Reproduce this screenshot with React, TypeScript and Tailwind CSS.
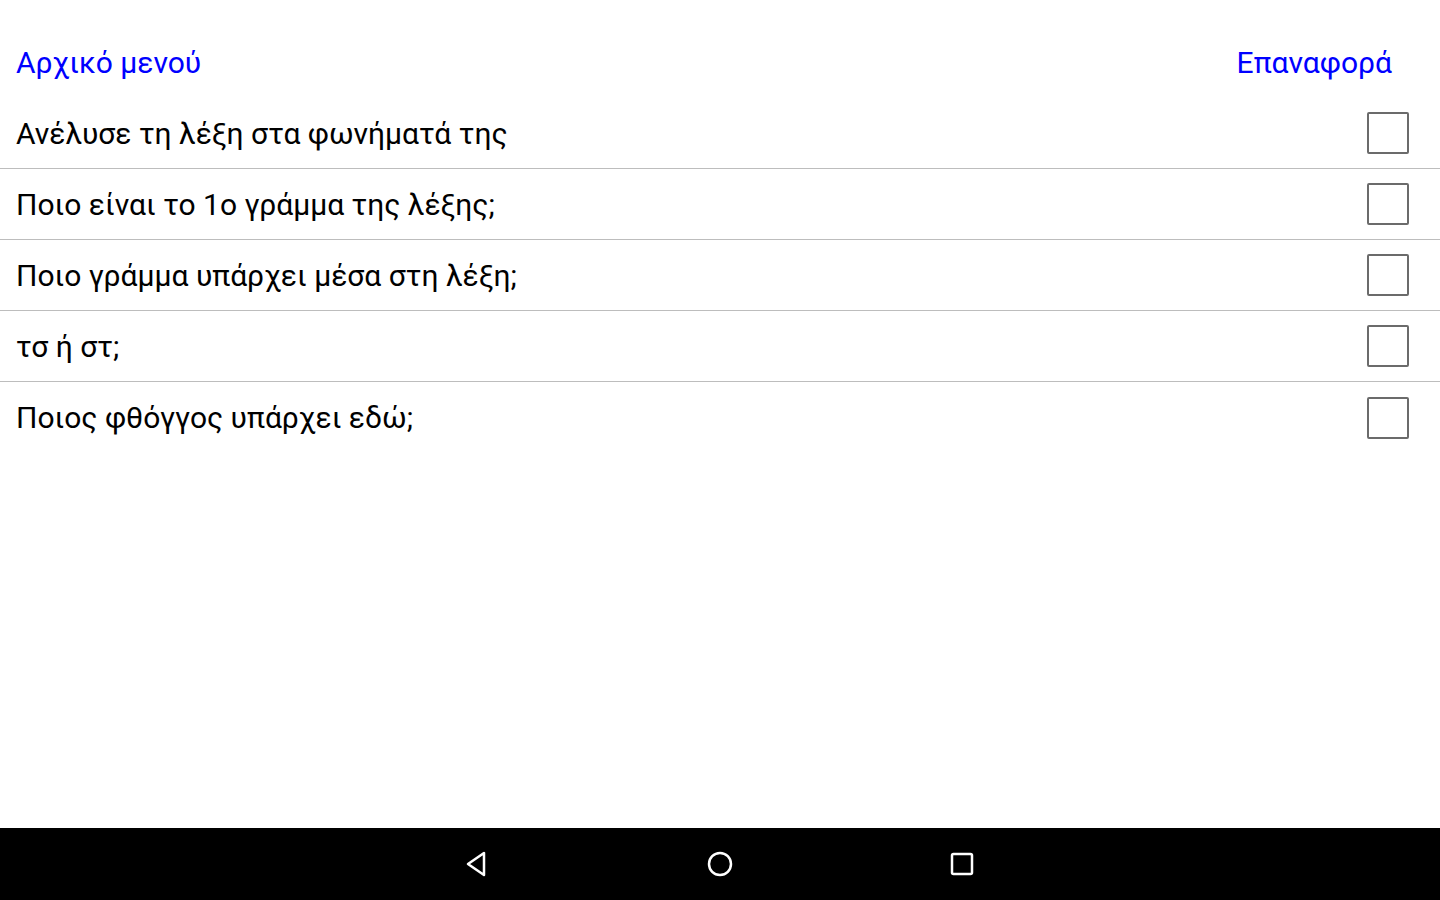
import React from 'react';

const questions = [
  'Ανέλυσε τη λέξη στα φωνήματά της',
  'Ποιο είναι το 1ο γράμμα της λέξης;',
  'Ποιο γράμμα υπάρχει μέσα στη λέξη;',
  'τσ ή στ;',
  'Ποιος φθόγγος υπάρχει εδώ;',
];

const App: React.FC = () => {
  return (
    <div className="flex h-[900px] w-[1440px] flex-col bg-white font-['Roboto',sans-serif]">
      {/* Header links */}
      <div className="flex h-[98px] items-center justify-between pl-[16px] pr-[48px] pt-[26px]">
        <span className="text-[30px] text-[#0000ff]">Αρχικό μενού</span>
        <span className="text-[30px] text-[#0000ff]">Επαναφορά</span>
      </div>

      {/* Question list */}
      <div className="flex-1">
        {questions.map((q, i) => (
          <div
            key={i}
            className={`flex h-[71px] items-center justify-between pl-[16px] pr-[31px] ${
              i < questions.length - 1 ? 'border-b border-[#bdbdbd]' : ''
            }`}
          >
            <span className="text-[30px] text-black">{q}</span>
            <div className="h-[42px] w-[42px] rounded-[2px] border-2 border-[#6b6b6b] bg-white" />
          </div>
        ))}
      </div>

      {/* Android nav bar */}
      <div className="flex h-[72px] items-center justify-center gap-[206px] bg-black">
        <svg width="36" height="36" viewBox="0 0 36 36" fill="none">
          <path d="M24 7 L24 29 L8 18 Z" stroke="white" strokeWidth="2.5" strokeLinejoin="round" />
        </svg>
        <svg width="36" height="36" viewBox="0 0 36 36" fill="none">
          <circle cx="18" cy="18" r="11" stroke="white" strokeWidth="2.5" />
        </svg>
        <svg width="36" height="36" viewBox="0 0 36 36" fill="none">
          <rect x="8" y="8" width="20" height="20" rx="1.5" stroke="white" strokeWidth="2.5" />
        </svg>
      </div>
    </div>
  );
};

export default App;
